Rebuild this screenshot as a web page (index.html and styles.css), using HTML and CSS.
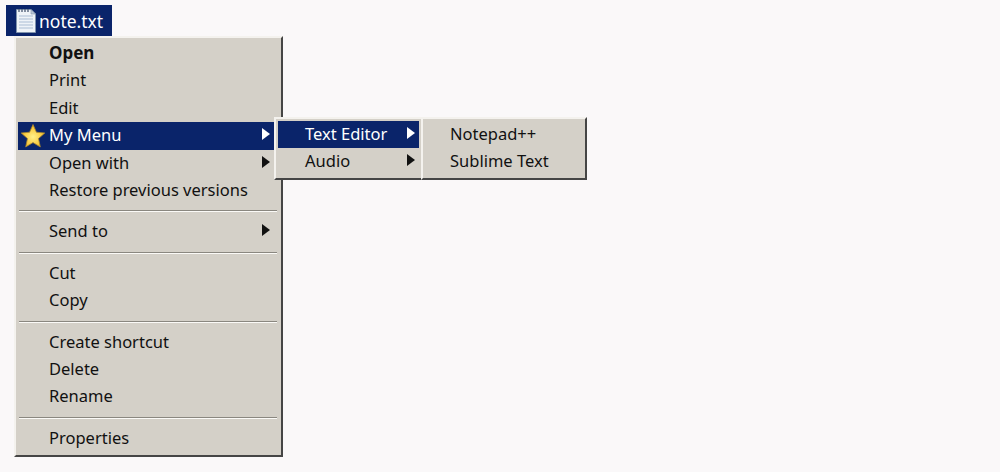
FILE: index.html
```
<!DOCTYPE html>
<html lang="en">
<head>
    <meta charset="UTF-8">
    <title>Context menu</title>
    <link rel="stylesheet" href="styles.css">
</head>
<body>
    <!-- selected file -->
    <div class="file">
        <svg class="file-icon" width="20" height="25" viewBox="0 0 20 25">
            <path d="M0.5 1.5H15L19.5 6V24.5H0.5Z" fill="#eef3f8" stroke="#7f93ad"/>
            <path d="M15 1.5V6H19.5Z" fill="#b9c6d6" stroke="#7f93ad" stroke-width="0.6"/>
            <path d="M3 1V4M6 1V4M9 1V4M12 1V4" stroke="#55647c" stroke-width="1.4"/>
            <path d="M3 8H17M3 11H17M3 14H17M3 17H17M3 20H17" stroke="#a9bdd4" stroke-width="1.2"/>
        </svg>
        <span class="file-name">note.txt</span>
    </div>

    <!-- main context menu -->
    <ul class="menu">
        <li class="item item-default">Open</li>
        <li class="item">Print</li>
        <li class="item">Edit</li>
        <li class="item item-active has-arrow">
            <svg class="star" width="26" height="26" viewBox="0 0 26 26">
                <defs>
                    <radialGradient id="starFill" cx="50%" cy="55%" r="55%">
                        <stop offset="0" stop-color="#fff08a"/>
                        <stop offset="1" stop-color="#f5b81e"/>
                    </radialGradient>
                </defs>
                <path d="M13 1.5L16.4 9.2L24.8 10L18.5 15.6L20.3 23.9L13 19.6L5.7 23.9L7.5 15.6L1.2 10L9.6 9.2Z" fill="url(#starFill)" stroke="#a8862f" stroke-width="0.8"/>
            </svg>
            My Menu
            <ul class="menu submenu submenu-first">
                <li class="item item-active has-arrow">
                    Text Editor
                    <ul class="menu submenu submenu-second">
                        <li class="item">Notepad++</li>
                        <li class="item">Sublime Text</li>
                    </ul>
                </li>
                <li class="item has-arrow">Audio</li>
            </ul>
        </li>
        <li class="item has-arrow">Open with</li>
        <li class="item">Restore previous versions</li>
        <li class="separator"></li>
        <li class="item has-arrow">Send to</li>
        <li class="separator"></li>
        <li class="item">Cut</li>
        <li class="item">Copy</li>
        <li class="separator"></li>
        <li class="item">Create shortcut</li>
        <li class="item">Delete</li>
        <li class="item">Rename</li>
        <li class="separator"></li>
        <li class="item">Properties</li>
    </ul>
</body>
</html>
```

FILE: styles.css
```
html, body {
    height: 100%;
}

body {
    margin: 0;
    padding: 5px 0 0 6px;
    box-sizing: border-box;
    overflow: hidden;
    background: #faf8f9;
    font-family: "Noto Sans", "Liberation Sans", sans-serif;
    font-size: 16.5px;
    color: #111;
}

/* selected file */
.file {
    display: flex;
    align-items: center;
    gap: 3px;
    width: 106px;
    height: 31px;
    padding-left: 10px;
    box-sizing: border-box;
    background: #0a246a;
}

.file-name {
    color: #fff;
    font-size: 17.5px;
}

/* menu box, raised win2000 style */
.menu {
    list-style: none;
    width: 269px;
    margin: 0 0 0 8px;
    padding: 2px 0 3px 2px;
    box-sizing: border-box;
    background: #d4d0c8;
    border-style: solid;
    border-width: 2px 2px 2px 2px;
    border-color: #f4f2ee #454545 #454545 #f4f2ee;
}

.item {
    position: relative;
    height: 27.4px;
    line-height: 26px;
    padding-left: 31px;
    margin-right: 7px;
    white-space: nowrap;
}

.item-default {
    font-weight: 700;
    font-size: 17px;
}

.item-active {
    background: #0a246a;
    color: #fff;
}

/* arrow for items with a submenu */
.has-arrow::after {
    content: "";
    position: absolute;
    top: 6px;
    right: 4px;
    border-style: solid;
    border-width: 6px 0 6px 8px;
    border-color: transparent transparent transparent #111;
}

.item-active.has-arrow::after {
    border-left-color: #fff;
}

.star {
    position: absolute;
    left: 2px;
    top: 1px;
}

.separator {
    height: 14px;
    margin: 0 4px 0 1px;
    box-sizing: border-box;
    padding-top: 6px;
}

.separator::before {
    content: "";
    display: block;
    height: 1px;
    background: #8a8780;
    border-bottom: 1px solid #fbfaf7;
}

/* flyouts */
.submenu {
    position: absolute;
    top: -5px;
    left: 256px;
    z-index: 1;
    margin: 0;
    padding-bottom: 3px;
    color: #111;
}

.submenu-first {
    width: 147px;
    border-right-width: 0;
}

.submenu-first .item {
    height: 27px;
    padding-left: 27px;
    margin-right: 2px;
}

.submenu-second {
    top: -4px;
    left: 143px;
    width: 166px;
    border-right-width: 2px;
}

.submenu-second .item {
    padding-left: 25px;
}
```
